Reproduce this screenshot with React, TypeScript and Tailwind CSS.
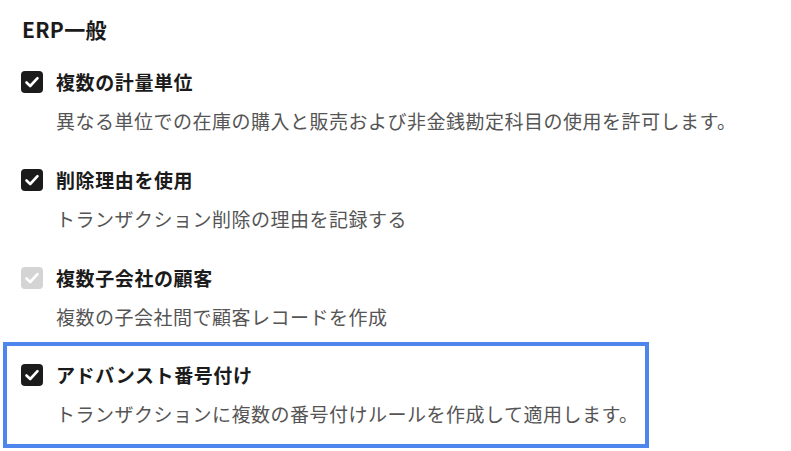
import React from "react";

const font = { fontFamily: '"Noto Sans CJK JP", "Noto Sans", sans-serif' };

function Check({ disabled }: { disabled?: boolean }) {
  return (
    <div
      className={`w-[22px] h-[22px] rounded-[4px] flex items-center justify-center shrink-0 ${
        disabled ? "bg-[#d4d4d4]" : "bg-[#1b1b1b]"
      }`}
    >
      <svg width="22" height="22" viewBox="0 0 22 22" fill="none">
        <path
          d="M5.5 11.5 L9.2 15 L16.5 7.2"
          stroke="white"
          strokeWidth="2.6"
          strokeLinecap="round"
          strokeLinejoin="round"
        />
      </svg>
    </div>
  );
}

function Row({ title, desc, disabled }: { title: string; desc: string; disabled?: boolean }) {
  return (
    <div>
      <div className="flex items-center h-[22px] gap-[13px]">
        <Check disabled={disabled} />
        <span className="text-[19px] leading-[22px] font-bold tracking-[0.6px] text-[#1b1b1b]">{title}</span>
      </div>
      <div className="mt-[15px] pl-[35px] text-[19px] leading-[26px] tracking-[0.5px] text-[#555555]">{desc}</div>
    </div>
  );
}

export default function App() {
  return (
    <div className="w-[791px] h-[451px] bg-white overflow-hidden" style={font}>
      <div className="pt-[15px] pl-[22px] text-[21px] leading-[28px] font-bold tracking-[0.3px] text-[#1b1b1b]">ERP一般</div>
      <div className="mt-[28px] pl-[21px] flex flex-col gap-[35px]">
        <Row title="複数の計量単位" desc="異なる単位での在庫の購入と販売および非金銭勘定科目の使用を許可します。" />
        <Row title="削除理由を使用" desc="トランザクション削除の理由を記録する" />
        <Row title="複数子会社の顧客" desc="複数の子会社間で顧客レコードを作成" disabled />
      </div>
      <div className="mt-[12px] ml-[3px] w-[646px] border-4 border-[#4f86ee] pl-[14px] pt-[18px] pb-[17px]">
        <Row title="アドバンスト番号付け" desc="トランザクションに複数の番号付けルールを作成して適用します。" />
      </div>
    </div>
  );
}
